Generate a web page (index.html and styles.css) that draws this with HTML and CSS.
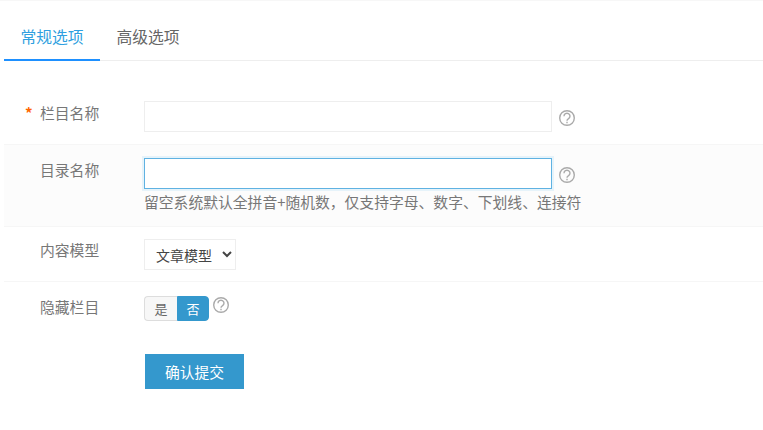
FILE: index.html
```html
<!DOCTYPE html>
<html lang="zh-CN">
<head>
<meta charset="utf-8">
<title>栏目</title>
<link rel="stylesheet" href="styles.css">
</head>
<body>
<div class="page">
  <div class="tabs">
    <a class="tab active">常规选项</a>
    <a class="tab">高级选项</a>
  </div>
  <form class="form">
    <div class="row row-first">
      <label class="label"><span class="req">*</span>栏目名称</label>
      <div class="field">
        <div class="line">
          <input class="input" type="text">
          <svg class="help" viewBox="0 0 16 16"><circle cx="8" cy="8" r="7.3"/><path d="M5 6.2a3 2.9 0 1 1 4.6 2.4c-1 .6-1.6 1.1-1.6 2.2"/><path d="M8 11.8v1.5"/></svg>
        </div>
      </div>
    </div>
    <div class="row row-dir">
      <label class="label">目录名称</label>
      <div class="field">
        <div class="line">
          <input class="input focus" type="text">
          <svg class="help" viewBox="0 0 16 16"><circle cx="8" cy="8" r="7.3"/><path d="M5 6.2a3 2.9 0 1 1 4.6 2.4c-1 .6-1.6 1.1-1.6 2.2"/><path d="M8 11.8v1.5"/></svg>
        </div>
        <div class="hint">留空系统默认全拼音+随机数，仅支持字母、数字、下划线、连接符</div>
      </div>
    </div>
    <div class="row row-model">
      <label class="label">内容模型</label>
      <div class="field">
        <select class="select"><option>文章模型</option></select>
      </div>
    </div>
    <div class="row row-hide">
      <label class="label">隐藏栏目</label>
      <div class="field switch-line">
        <span class="switch">
          <span class="opt">是</span>
          <span class="opt on">否</span>
        </span>
        <svg class="help help-small" viewBox="0 0 16 16"><circle cx="8" cy="8" r="7.3"/><path d="M5 6.2a3 2.9 0 1 1 4.6 2.4c-1 .6-1.6 1.1-1.6 2.2"/><path d="M8 11.8v1.5"/></svg>
      </div>
    </div>
    <div class="actions">
      <button class="submit" type="button">确认提交</button>
    </div>
  </form>
</div>
</body>
</html>
```
FILE: styles.css
```css
* { box-sizing: border-box; }
html, body { margin: 0; padding: 0; background: #fff; }
body {
  font-family: "Noto Sans CJK SC", "Liberation Sans", sans-serif;
  font-size: 14px;
  color: #666;
  height: 430px;
  overflow: hidden;
}
.page {
  padding-left: 4px;
  border-top: 1px solid #f7f7f7;
}
.tabs {
  display: flex;
  height: 60px;
  border-bottom: 1px solid #eee;
}
.tab {
  width: 96px;
  height: 60px;
  padding-top: 26px;
  line-height: 20px;
  text-align: center;
  font-size: 15.8px;
  color: #666;
}
.tab.active {
  color: #2f9fe0;
  border-bottom: 2px solid #1e90ff;
}
.form { padding-top: 29px; }
.row {
  display: flex;
  border-bottom: 1px solid #f6f6f6;
}
.row-first { height: 55px; padding-top: 12px; }
.row-dir { height: 82px; padding-top: 14px; background: #fcfcfc; }
.row-model { height: 55px; padding-top: 12px; }
.row-hide { border-bottom: 0; height: 55px; padding-top: 14px; }
.row-first .field { margin-top: -1px; }
.row-dir .field { margin-top: -1px; }
.label {
  width: 140px;
  flex: none;
  padding-left: 36px;
  position: relative;
  font-size: 14.8px;
  line-height: 22px;
  color: #777;
}
.req {
  position: absolute;
  left: 21px;
  top: 0;
  color: #f60;
  font-size: 15px;
  font-weight: bold;
}
.line { display: flex; align-items: flex-start; }
.input {
  display: block;
  width: 408px;
  height: 31px;
  margin: 0;
  padding: 0 8px;
  border: 1px solid #eee;
  background: #fff;
  outline: 0;
}
.input.focus {
  border-color: #5fb2e2;
  box-shadow: 0 0 0 2px #e6f3fa;
}
.help {
  width: 16px;
  height: 16px;
  margin: 9px 0 0 7px;
  fill: none;
  stroke: #aaa;
  stroke-width: 1.4;
}
.help-small { margin: 1px 0 0 4px; }
.hint {
  margin-top: 2px;
  font-size: 14.8px;
  line-height: 22px;
  color: #777;
  white-space: nowrap;
}
.select {
  display: block;
  width: 92px;
  height: 31px;
  padding: 0 3px 0 7px;
  border: 1px solid #eee;
  background: #fff;
  font: inherit;
  color: #444;
  outline: 0;
}
.switch-line { display: flex; align-items: flex-start; }
.switch {
  display: flex;
  height: 25px;
  font-size: 13px;
  line-height: 23px;
  text-align: center;
}
.opt {
  width: 33px;
  color: #666;
  background: #f7f7f7;
  border: 1px solid #ddd;
  border-right: 0;
  border-radius: 4px 0 0 4px;
}
.opt.on {
  width: 32px;
  color: #fff;
  background: #3498cd;
  border: 1px solid #3498cd;
  border-radius: 0 4px 4px 0;
}
.actions { padding: 17px 0 0 141px; }
.submit {
  display: block;
  width: 99px;
  height: 35px;
  padding: 0;
  border: 0;
  background: #3498cd;
  color: #fff;
  font-family: inherit;
  font-size: 14.8px;
}
```
